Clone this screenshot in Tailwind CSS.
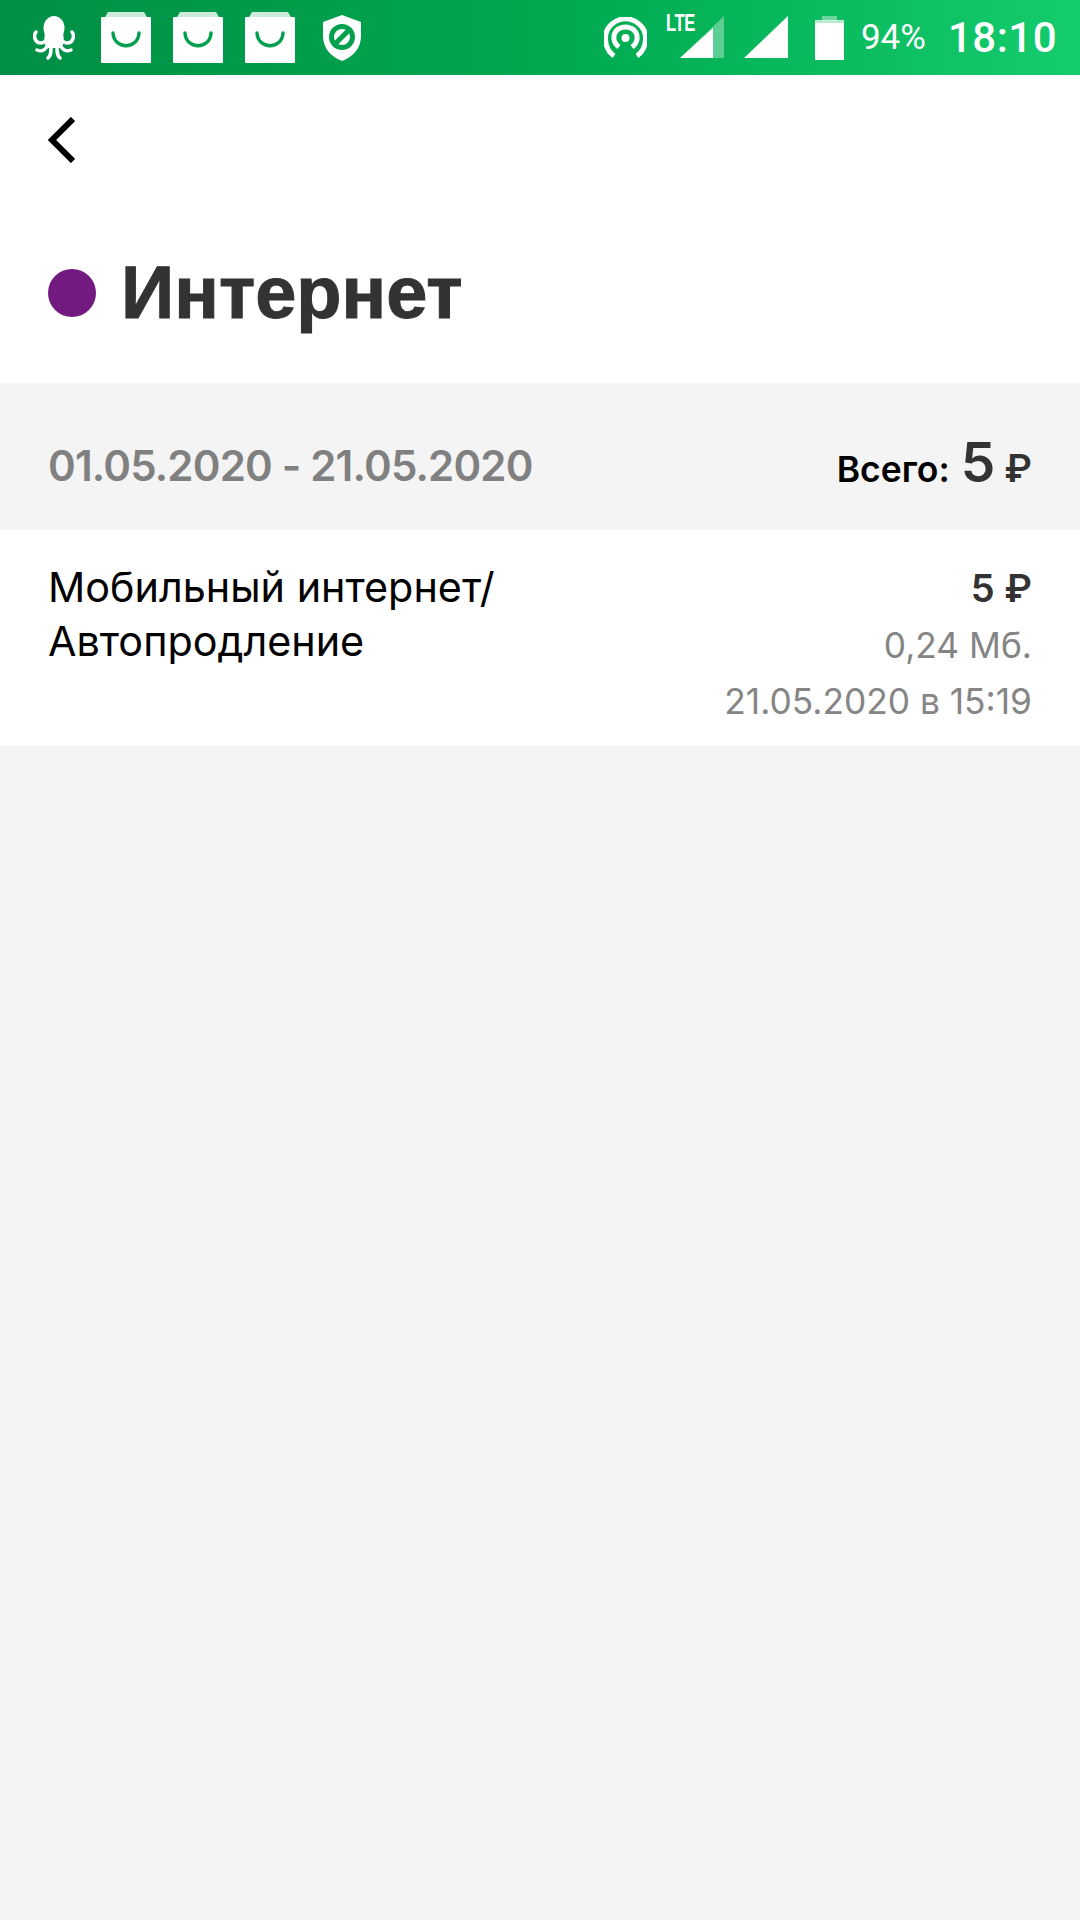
<!DOCTYPE html>
<html lang="ru">
<head>
  <meta charset="UTF-8" />
  <title>Интернет</title>
  <script src="https://cdn.jsdelivr.net/npm/@tailwindcss/browser@4"></script>
</head>
<body class="w-[1080px] h-[1920px] bg-[#f4f4f4] font-['Inter',sans-serif] overflow-hidden">

  <!-- status bar -->
  <div class="h-[75px] flex items-center pl-[33px] pr-[23px] text-white bg-gradient-to-r from-[#008f45] via-[#00a850] to-[#14cc6c]">
    <svg class="w-[42px] h-[44px] mt-[1px]" viewBox="0 0 42 44" fill="#fff" stroke="#fff" stroke-width="3.500" stroke-linecap="round">
      <ellipse cx="21" cy="12" rx="10.500" ry="12" stroke="none"/>
      <path d="M12 16Q10 28 14 32H28Q32 28 30 16z" stroke="none"/>
      <g fill="none">
        <path d="M3 16C0 20 2 27 8 27 11 27 13 25 14 22"/>
        <path d="M39 16C42 20 40 27 34 27 31 27 29 25 28 22"/>
        <path d="M15 28C13 34 9 36 4 34"/>
        <path d="M27 28C29 34 33 36 38 34"/>
        <path d="M18 30C18 36 18 40 15 42"/>
        <path d="M24 30C24 36 24 40 27 42"/>
      </g>
    </svg>
    <svg class="w-[50px] h-[51px] ml-[26px]" viewBox="0 0 50 51">
      <path d="M4 5 7 0h36l3 5z" fill="#fff" opacity=".8"/>
      <rect y="5" width="50" height="46" rx="1" fill="#fff"/>
      <path d="M12 21c1 17 25 17 26 0" fill="none" stroke="#00a04c" stroke-width="3.500" stroke-linecap="round"/>
    </svg>
    <svg class="w-[50px] h-[51px] ml-[22px]" viewBox="0 0 50 51">
      <path d="M4 5 7 0h36l3 5z" fill="#fff" opacity=".8"/>
      <rect y="5" width="50" height="46" rx="1" fill="#fff"/>
      <path d="M12 21c1 17 25 17 26 0" fill="none" stroke="#00a04c" stroke-width="3.500" stroke-linecap="round"/>
    </svg>
    <svg class="w-[50px] h-[51px] ml-[22px]" viewBox="0 0 50 51">
      <path d="M4 5 7 0h36l3 5z" fill="#fff" opacity=".8"/>
      <rect y="5" width="50" height="46" rx="1" fill="#fff"/>
      <path d="M12 21c1 17 25 17 26 0" fill="none" stroke="#00a04c" stroke-width="3.500" stroke-linecap="round"/>
    </svg>
    <svg class="w-[38px] h-[46px] ml-[28px]" viewBox="0 0 38 46">
      <path d="M19 0 38 7v14c0 12-8 21-19 25C8 42 0 33 0 21V7z" fill="#fff"/>
      <circle cx="19" cy="22" r="10.5" fill="none" stroke="#00a04c" stroke-width="5"/>
      <path d="M13 28 25 16" stroke="#00a04c" stroke-width="5"/>
    </svg>

    <svg class="w-[43px] h-[41px] ml-auto" viewBox="0 0 43 41" fill="none" stroke="#fff">
      <path d="M10 39C-1 31-1 14 8 7c8-7 19-7 27 0 9 7 9 24-2 32" stroke-width="5"/>
      <path d="M15 30c-7-5-6-13-2-17 5-4 12-4 17 0 4 4 5 12-2 17" stroke-width="5"/>
      <circle cx="21.500" cy="21" r="4" fill="#fff" stroke="none"/>
    </svg>
    <div class="relative w-[58px] h-[43px] ml-[19px]">
      <span class="absolute left-0 top-[-5px] font-['Liberation_Sans',sans-serif] font-bold text-[23px] leading-[24px] tracking-[-.5px] scale-x-[.72] origin-left">LTE</span>
      <svg class="absolute left-[14px] top-0 w-[44px] h-[43px]" viewBox="0 0 44 43">
        <path d="M0 42 44 0v42z" fill="#fff" opacity=".35"/>
        <path d="M0 42 33 12v30z" fill="#fff"/>
      </svg>
    </div>
    <svg class="w-[44px] h-[43px] ml-[20px]" viewBox="0 0 44 43">
      <path d="M0 42 44 0v42z" fill="#fff"/>
    </svg>
    <svg class="w-[29px] h-[44px] ml-[27px]" viewBox="0 0 29 44">
      <rect x="7" width="15" height="5" fill="#fff" opacity=".4"/>
      <rect y="4" width="29" height="3" fill="#fff" opacity=".7"/>
      <rect y="7" width="29" height="37" fill="#fff"/>
    </svg>
    <span class="ml-[17px] text-[35px] leading-none font-['Roboto',sans-serif]">94%</span>
    <span class="ml-[22px] text-[42px] leading-none font-medium tracking-[.5px] font-['Roboto',sans-serif]">18:10</span>
  </div>

  <!-- header -->
  <div class="h-[308px] bg-white pl-[48px] pt-[42px]">
    <svg class="w-[28px] h-[46px] -ml-[1px]" viewBox="0 0 28 46" fill="none" stroke="#000" stroke-width="6">
      <path d="M26 2 5 23l21 21"/>
    </svg>
    <div class="flex items-center mt-[87px]">
      <span class="w-[48px] h-[48px] rounded-full bg-[#731a80]"></span>
      <h1 class="ml-[25px] text-[74px] leading-[84px] pt-[1px] font-bold text-[#333] [-webkit-text-stroke:1px_#333] font-['Liberation_Sans',sans-serif]">Интернет</h1>
    </div>
  </div>

  <!-- period -->
  <div class="h-[147px] flex items-center justify-between px-[48px] pt-[18px]">
    <span class="text-[42px] font-semibold text-[#808080] tracking-[-.8px]">01.05.2020 - 21.05.2020</span>
    <div class="flex items-baseline">
      <span class="text-[35.500px] font-semibold text-black">Всего:</span>
      <span class="ml-[11px] text-[55px] leading-none font-semibold text-[#333]">5</span>
      <span class="ml-[9px] text-[38px] leading-none font-semibold text-[#333]">₽</span>
    </div>
  </div>

  <!-- item -->
  <div class="h-[216px] bg-white flex justify-between px-[48px] pt-[30px]">
    <p class="text-[41.300px] leading-[54px] text-black">Мобильный интернет/<br>Автопродление</p>
    <div class="text-right text-[#858585] text-[35.300px] leading-[56px]">
      <p class="font-semibold text-[#333] text-[38px]">5 ₽</p>
      <p class="mt-[2px]">0,24 Мб.</p>
      <p>21.05.2020 в 15:19</p>
    </div>
  </div>

</body>
</html>
